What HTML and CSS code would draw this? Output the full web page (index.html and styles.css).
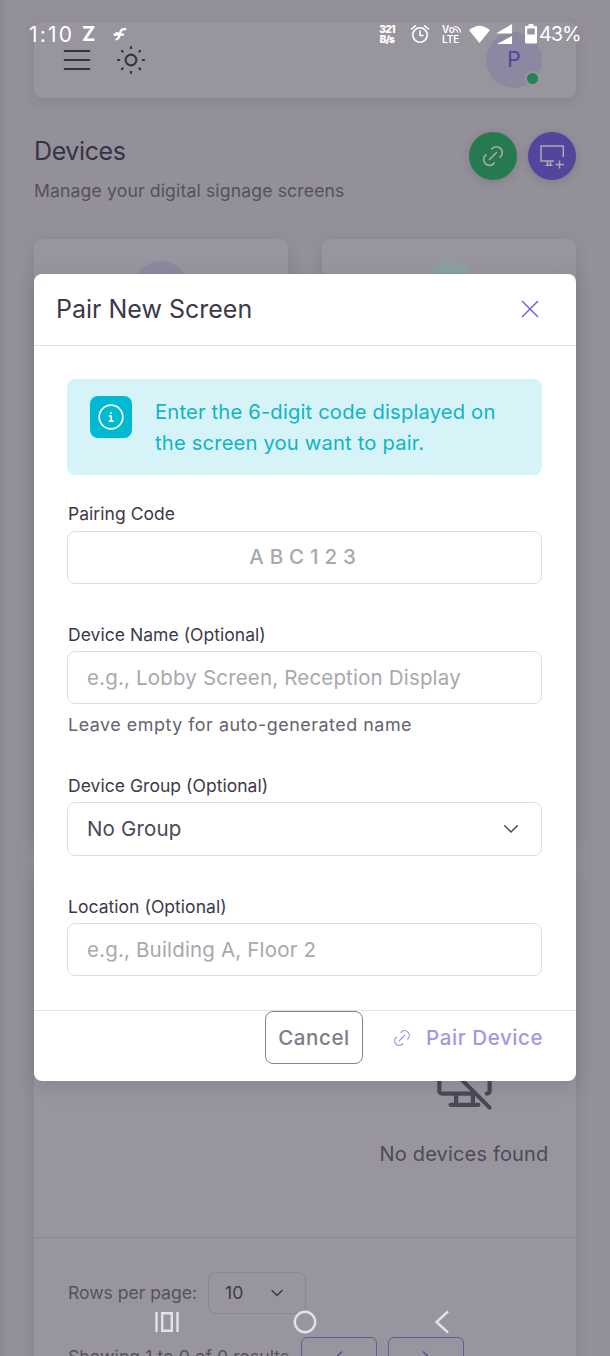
FILE: index.html
```html
<!DOCTYPE html>
<html lang="en">
<head>
<meta charset="utf-8">
<title>Devices</title>
<link rel="stylesheet" href="styles.css">
</head>
<body>
<div class="screen">
  <main class="page">
    <header class="topbar">
      <div class="topbar-tools">
        <svg class="icon-lg" viewBox="0 0 24 24"><path d="M3.800 6h16.400M3.800 12h16.400M3.800 18h16.400"/></svg>
        <svg class="icon-lg" viewBox="0 0 24 24"><circle cx="12" cy="12" r="3.6"/><path d="M3.3 12h.9M12 3.3v.9M19.8 12h.9M12 19.8v.9M5.9 5.9l.6.6M18.1 5.9l-.6.6M17.5 17.5l.6.6M6.5 17.5l-.6.6"/></svg>
      </div>
      <div class="avatar">P<span class="online"></span></div>
    </header>

    <section class="heading">
      <div>
        <h1>Devices</h1>
        <p>Manage your digital signage screens</p>
      </div>
      <div class="actions">
        <span class="round green"><svg class="icon" viewBox="0 0 24 24"><path d="M9 15l6-6M11 6l.46-.54a5 5 0 0 1 7.07 7.07L18 13M13 18l-.4.53a5.07 5.07 0 0 1-7.13 0a4.97 4.97 0 0 1 0-7.07L6 11"/></svg></span>
        <span class="round violet"><svg class="icon-screen" viewBox="0 0 26 26"><path d="M24.300 14V3H2v15H15M8.500 18v4M6.500 22.200h7M11.500 18v4M20.500 17.500v8M16.500 21.500h8.500"/></svg></span>
      </div>
    </section>

    <section class="stats">
      <div class="stat"><span class="blob lilac"></span></div>
      <div class="stat"><span class="blob mint"></span></div>
    </section>

    <section class="table-card">
      <div class="empty">
        <svg class="icon-empty" viewBox="0 0 24 24"><path d="M8 4h12a1 1 0 0 1 1 1v10a1 1 0 0 1-1 1M16 16H4a1 1 0 0 1-1-1V5a1 1 0 0 1 1-1M7 20h10M9 16v4M15 16v4M3 3l18 18"/></svg>
        <p>No devices found</p>
      </div>
      <footer class="pager">
        <div class="rows"><span class="rows-label">Rows per page:</span>
          <span class="rows-select"><span>10</span><svg viewBox="0 0 14 14"><path d="M2 4.500l5 5 5-5"/></svg></span>
        </div>
        <div class="results"><span class="results-label">Showing 1 to 0 of 0 results</span>
          <span class="page-btn"><svg viewBox="0 0 14 14"><path d="M9.500 2l-5 5 5 5"/></svg></span>
          <span class="page-btn"><svg viewBox="0 0 14 14"><path d="M4.500 2l5 5-5 5"/></svg></span>
        </div>
      </footer>
    </section>
  </main>

  <section class="modal">
    <header class="modal-head">
      <h2>Pair New Screen</h2>
      <svg class="close" viewBox="0 0 18 18"><path d="M1.500 1.500l15 15M16.500 1.500l-15 15"/></svg>
    </header>
    <div class="modal-body">
      <div class="alert">
        <span class="alert-icon"><svg viewBox="0 0 28 28"><circle cx="14" cy="14" r="11.800"/><path d="M12.500 13h1.700v5M12.500 18.200h3.500M14 9.500v.8"/></svg></span>
        <p>Enter the 6-digit code displayed on<br>the screen you want to pair.</p>
      </div>
      <div class="field">
        <label>Pairing Code</label>
        <div class="input code">ABC123</div>
      </div>
      <div class="field named">
        <label>Device Name (Optional)</label>
        <div class="input">e.g., Lobby Screen, Reception Display</div>
        <small>Leave empty for auto-generated name</small>
      </div>
      <div class="field group">
        <label>Device Group (Optional)</label>
        <div class="input select"><span>No Group</span><svg viewBox="0 0 14 14"><path d="M.7 3.700L7 10l6.300-6.300"/></svg></div>
      </div>
      <div class="field">
        <label>Location (Optional)</label>
        <div class="input">e.g., Building A, Floor 2</div>
      </div>
    </div>
    <footer class="modal-foot">
      <span class="cancel">Cancel</span>
      <span class="pair"><svg viewBox="0 0 24 24"><path d="M9 15l6-6M11 6l.46-.54a5 5 0 0 1 7.07 7.07L18 13M13 18l-.4.53a5.07 5.07 0 0 1-7.13 0a4.97 4.97 0 0 1 0-7.07L6 11"/></svg><span>Pair Device</span></span>
    </footer>
  </section>

  <div class="status">
    <span class="time">1:10</span>
    <span class="z">Z</span>
    <svg class="bird" viewBox="0 0 16 16"><path d="M14 2.500C9 1.500 8.500 5 7.500 9.500S5 13.500 4 14M1.500 8.700h10M4 7l5 1.500" /></svg>
    <span class="speed"><b>321</b><b>B/s</b></span>
    <svg class="alarm" viewBox="0 0 20 20"><circle cx="10" cy="11" r="7.200"/><path d="M10 7v4.500h3M1.500 5l3.800-3.200M18.500 5l-3.800-3.200"/></svg>
    <span class="volte"><b>Vo</b><b>LTE</b><svg viewBox="0 0 10 10"><path d="M1 5a4 4 0 0 1 3.500 4M1 2a7 7 0 0 1 7 7"/></svg></span>
    <svg class="wifi" viewBox="0 0 22 20"><path d="M0 5.500Q11-4 22 5.500L11 19z"/></svg>
    <svg class="signal" viewBox="0 0 18 22"><path d="M17 0v10H0zM17 12.500V21H1z"/></svg>
    <svg class="battery" viewBox="0 0 12 20"><path fill-rule="evenodd" d="M3.500 0h5v2H11q1 0 1 1v15q0 1.500-1.500 1.500h-9Q0 19.500 0 18V3q0-1 1-1h2.500zM2.200 4.500v6h7.600v-6z"/></svg>
    <span class="percent">43%</span>
  </div>

  <div class="navbar">
    <svg class="recents" viewBox="0 0 24 22"><path d="M1.500 1v20M22.500 1v20M7.200 2.200h9.600v17.600H7.200z"/></svg>
    <svg class="home" viewBox="0 0 24 24"><circle cx="12" cy="12" r="10.200"/></svg>
    <svg class="back" viewBox="0 0 16 24"><path d="M14 1.500L2.500 12 14 22.500"/></svg>
  </div>
</div>
</body>
</html>
```
FILE: styles.css
```css
* { box-sizing: border-box; }
body, h1, h2, p { margin: 0; font-weight: 400; }
body { font-family: Inter, "Open Sans", sans-serif; }
svg { display: block; fill: none; stroke: currentColor; stroke-width: 1.5; stroke-linecap: round; stroke-linejoin: round; flex: none; }
.screen { position: relative; width: 610px; height: 1356px; overflow: hidden; background: linear-gradient(90deg, #8b8892, #93909a 9px, #93909a); }
.page { padding: 22px 34px 0; color: #55515f; }

.topbar { display: flex; justify-content: space-between; height: 76px; padding: 10px 34px 10px 25px; border-radius: 8px; background: #98959f; box-shadow: 0 4px 14px rgba(47,43,61,.1); color: #373346; }
.topbar-tools { display: flex; gap: 18px; padding-top: 10px; }
.icon-lg { width: 36px; height: 36px; stroke-width: 1.4; }
.avatar { position: relative; width: 56px; height: 56px; border-radius: 50%; background: #8d88a2; color: #51439b; text-align: center; font-size: 21px; line-height: 56px; }
.online { position: absolute; right: 2px; bottom: 2px; width: 15px; height: 15px; border: 2.500px solid #98959f; border-radius: 50%; background: #238354; }

.heading { display: flex; justify-content: space-between; padding-top: 34px; height: 141px; }
.heading h1 { color: #373346; font-size: 25px; line-height: 38px; letter-spacing: -.4px; }
.heading p { padding-top: 7px; font-size: 17.6px; line-height: 28px; letter-spacing: .14px; }
.actions { display: flex; gap: 11px; }
.round { display: grid; place-items: center; width: 48px; height: 48px; border-radius: 50%; color: #aaa8b0; box-shadow: 0 2px 8px rgba(47,43,61,.2); }
.green { background: #257a50; }
.violet { background: #53459b; }
.icon { width: 28px; height: 28px; stroke-width: 1.4; }
.icon-screen { width: 26px; height: 26px; stroke-linecap: butt; stroke-linejoin: miter; }

.stats { display: grid; grid-template-columns: 1fr 1fr; gap: 34px; }
.stat { height: 600px; padding-top: 22px; border-radius: 8px; background: #98959f; box-shadow: 0 4px 14px rgba(47,43,61,.13); }
.blob { display: block; width: 56px; height: 56px; margin: auto; border-radius: 50%; }
.lilac { background: #8d89a2; }
.mint { background: #8ba0a3; }

.table-card { margin-top: 34px; border-radius: 8px; background: #98959f; box-shadow: 0 4px 14px rgba(47,43,61,.13); }
.empty { height: 365px; padding: 176px 0 0 318px; text-align: center; border-bottom: 1px solid #898691; }
.icon-empty { width: 67px; height: 67px; margin: 0 auto; color: #4b4757; }
.empty p { padding-top: 24px; font-size: 20px; line-height: 28px; letter-spacing: .16px; color: #4d495a; white-space: nowrap; }
.pager { padding: 34px; font-size: 17.6px; }
.rows, .results { display: flex; align-items: center; white-space: nowrap; }
.rows-label { width: 140px; padding-bottom: 1px; letter-spacing: -.04px; }
.rows-select { display: flex; align-items: center; justify-content: space-between; width: 98px; height: 42px; padding: 0 21px 1px 16px; border: 1px solid #8a8793; border-radius: 8px; color: #3e3a4a; }
.rows-select svg, .page-btn svg { width: 14px; height: 14px; }
.results { margin-top: 23px; }
.results-label { width: 233px; padding-bottom: 1px; letter-spacing: .06px; }
.page-btn { display: grid; place-items: center; width: 76px; height: 40px; margin-right: 11px; border: 1px solid #675a9d; border-radius: 6px; color: #5a4e92; }

.modal { position: absolute; left: 34px; top: 274px; width: 542px; height: 807px; border-radius: 8px; background: #fff; box-shadow: 0 5px 20px rgba(47,43,61,.15); color: #3c394a; }
.modal-head { display: flex; align-items: center; justify-content: space-between; height: 72px; padding: 0 37px 2px 22px; border-bottom: 1px solid #e3e3e5; }
.modal-head h2 { font-size: 25px; line-height: 38px; white-space: nowrap; }
.close { width: 18px; height: 18px; color: #6a59db; stroke-width: 1.400; }
.modal-body { height: 664px; padding: 33px 34px 0 33px; }
.alert { display: flex; gap: 23px; height: 96px; padding: 17px 23px; border-radius: 8px; background: #d6f3f7; color: #10b4c6; white-space: nowrap; }
.alert-icon { display: grid; place-items: center; flex: none; width: 42px; height: 42px; border-radius: 8px; background: #00bad1; color: #fff; }
.alert-icon svg { width: 28px; height: 28px; stroke-width: 1.700; }
.alert p { font-size: 20.200px; line-height: 31px; letter-spacing: .17px; }
.field { padding-top: 27px; height: 120px; }
.field label { display: block; height: 29px; padding-left: 1px; font-size: 17.500px; line-height: 23px; letter-spacing: .04px; white-space: nowrap; }
.field + .field label { padding-top: 1px; }
.input { display: flex; align-items: center; height: 53px; padding: 0 19px 1px; border: 1px solid #dedee1; border-radius: 8px; font-size: 20.500px; letter-spacing: .17px; color: #a9a8ac; white-space: nowrap; }
.code { justify-content: center; padding: 0 19px 2px 21px; font-weight: 500; letter-spacing: 5.900px; }
.named { height: 151px; }
.group { height: 121px; }
.field small { display: block; padding: 7px 0 0 1px; font-size: 17.900px; line-height: 28px; letter-spacing: .52px; color: #66636f; white-space: nowrap; }
.select { justify-content: space-between; height: 54px; padding-right: 23px; color: #4a4756; }
.select svg { width: 14px; height: 14px; }
.modal-foot { display: flex; justify-content: flex-end; height: 71px; padding-right: 34px; border-top: 1px solid #e3e3e5; font-size: 20.500px; letter-spacing: .6px; }
.cancel { width: 98px; height: 53px; border: 1px solid #808390; border-radius: 8px; color: #7c7e89; text-align: center; line-height: 52px; font-weight: 450; }
.pair { display: flex; align-items: center; width: 149px; height: 53px; margin-left: 30px; color: #a298e5; font-weight: 450; white-space: nowrap; }
.pair svg { width: 22px; height: 22px; margin-right: 13px; margin-left: -2px; stroke-width: 1.300; }

.status { position: absolute; left: 0; top: 0; display: flex; align-items: center; width: 610px; height: 68px; padding-left: 29px; color: #fff; white-space: nowrap; }
.time { width: 53px; font-size: 21px; letter-spacing: 2.200px; }
.z { width: 31px; font-size: 20px; font-weight: 700; }
.bird { width: 14px; height: 16px; stroke-width: 2.600; }
.speed, .volte { display: flex; flex-direction: column; font-size: 10px; line-height: 10px; }
.speed { width: 31px; margin-left: 252px; font-size: 10px; font-weight: 700; letter-spacing: -.8px; }
.speed b { width: 16px; text-align: center; }
.alarm { width: 20px; height: 20px; stroke-width: 1.600; }
.volte { position: relative; width: 27px; margin-left: 12px; }
.volte b { font-weight: 600; }
.volte svg { position: absolute; left: 12px; top: 1px; width: 8px; height: 8px; }
.wifi { width: 21px; height: 19px; fill: #fff; stroke: none; }
.signal { width: 17px; height: 21px; margin-left: 6px; fill: #fff; stroke: none; }
.battery { width: 12px; height: 20px; margin-left: 12px; fill: #fff; stroke: none; }
.percent { margin-left: 2px; font-size: 20px; letter-spacing: -1.100px; }

.navbar { position: absolute; left: 155px; top: 1310px; display: flex; align-items: center; height: 24px; color: #e3e2e6; }
.navbar svg { stroke-width: 2.400; stroke-linecap: butt; stroke-linejoin: miter; }
.recents { width: 24px; height: 22px; }
.home { width: 24px; height: 24px; margin-left: 114px; }
.back { width: 16px; height: 24px; margin-left: 117px; }
```
